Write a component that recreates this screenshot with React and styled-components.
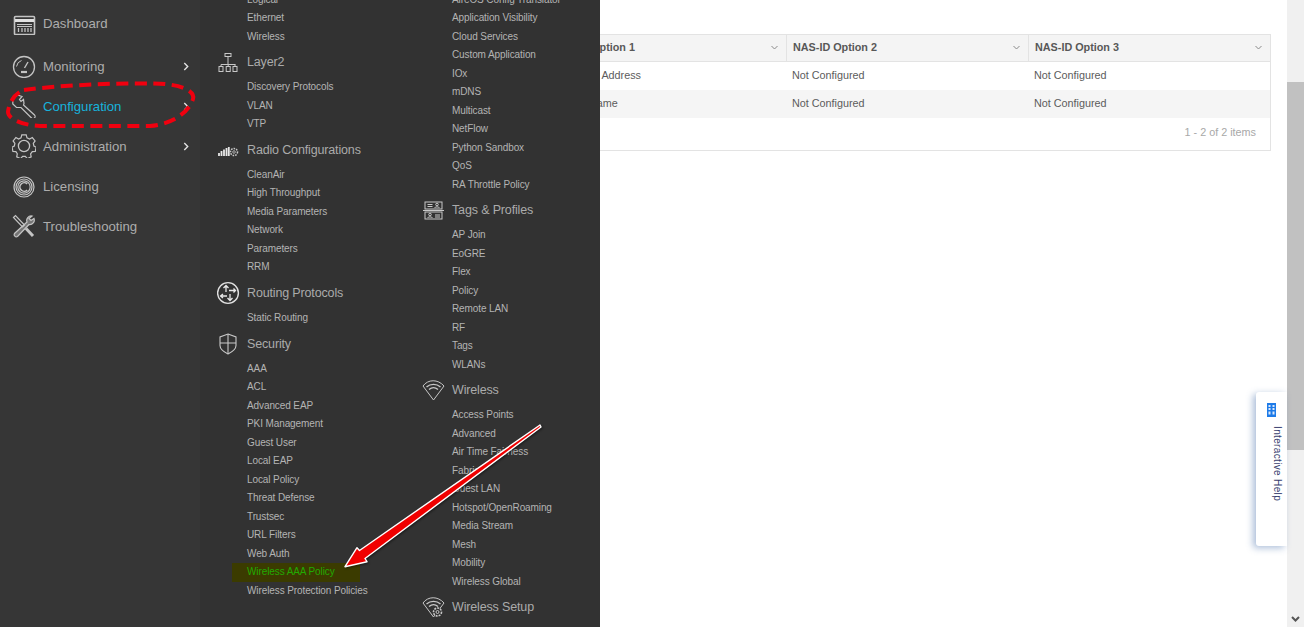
import React from "react";
import styled, { createGlobalStyle } from "styled-components";

const Global = createGlobalStyle`
  html, body { margin: 0; padding: 0; height: 627px; overflow: hidden; background: #fff; }
  body { font-family: "Liberation Sans", Arial, sans-serif; }
  * { box-sizing: border-box; }
`;

const Page = styled.div`
  position: relative;
  display: flex;
  width: 1304px;
  height: 627px;
  overflow: hidden;
`;
const Sidebar = styled.nav`
  flex: 0 0 200px;
  background: #363636;
  padding-top: 3px;
  display: flex;
  flex-direction: column;
`;
const NavItem = styled.div`
  display: flex;
  align-items: center;
  height: 40px;
  padding: 0 11px 0 12px;
  gap: 7px;
  margin-bottom: ${(p) => (p.$first ? "3px" : "0")};
  font-size: 13.2px;
  color: ${(p) => (p.$active ? "#17b3dc" : "#adadad")};
`;
const NavIcon = styled.svg`
  flex: 0 0 24px;
  width: 24px;
  height: 24px;
  fill: none;
  stroke: #c4c4c4;
  stroke-width: 1.2;
`;
const NavChevron = styled.svg`
  margin-left: auto;
  width: 6px;
  height: 9px;
  fill: none;
  stroke: #e4e4e4;
  stroke-width: 1.6;
`;
const Main = styled.main`
  flex: 1;
  min-width: 0;
  padding: 34px 33px 0 0;
  display: flex;
  justify-content: flex-end;
`;
const Table = styled.div`
  width: 971px;
  height: 117px;
  border: 1px solid #e3e3e3;
  font-size: 10.8px;
  color: #555;
  align-self: flex-start;
`;
const Row = styled.div`
  display: grid;
  grid-template-columns: 244px 242px 242px 1fr;
  height: 28px;
  padding-bottom: 2px;
  align-items: center;
  background: ${(p) => (p.$shade ? "#f5f5f5" : "#fff")};
`;
const HeadRow = styled(Row)`
  height: 27px;
  padding-bottom: 0;
  background: #f4f4f4;
  border-bottom: 1px solid #e3e3e3;
`;
const HeadCell = styled.div`
  height: 100%;
  display: flex;
  align-items: center;
  justify-content: space-between;
  padding: 0 8px 2px 6px;
  font-weight: 700;
  color: #585858;
  border-right: ${(p) => (p.$last ? "none" : "1px solid #e3e3e3")};
`;
const Cell = styled.div`
  padding-left: 5px;
  color: #5c5c5c;
`;
const SortIcon = styled.svg`
  width: 7px;
  height: 5px;
  fill: none;
  stroke: #8a8a8a;
  stroke-width: 1;
`;
const Pager = styled.div`
  height: 33px;
  display: flex;
  align-items: center;
  justify-content: flex-end;
  padding: 0 14px 5px 0;
  color: #a8a8a8;
`;
const Menu = styled.div`
  position: absolute;
  left: 200px;
  top: 0;
  width: 400px;
  height: 627px;
  background: #323232;
  overflow: hidden;
  display: flex;
`;
const MenuCol = styled.div`
  flex: 0 0 ${(p) => p.$w}px;
  margin-top: -9.5px;
  padding-left: 17px;
`;
const Group = styled.div`
  display: flex;
  align-items: center;
  height: 32.2px;
  font-size: 12.5px;
  letter-spacing: -0.15px;
  color: #ababab;
`;
const GroupIcon = styled.svg`
  flex: 0 0 30px;
  width: 30px;
  height: 24px;
  fill: none;
  stroke: #c8c8c8;
  stroke-width: 1;
`;
const Item = styled.div`
  height: 18.5px;
  line-height: 18.5px;
  padding-left: 30px;
  font-size: 10px;
  letter-spacing: -0.1px;
  white-space: nowrap;
  color: #b4b4b4;
`;
const ActiveItem = styled(Item)`
  margin-left: 15px;
  padding-left: 15px;
  width: 128px;
  color: #22aa00;
  background: #3b3b00;
`;
const Track = styled.div`
  position: absolute;
  right: 0;
  top: 0;
  width: 17px;
  height: 627px;
  background: #f0f0f0;
  padding-top: 82px;
`;
const Thumb = styled.div`
  height: 368px;
  background: #c1c1c1;
`;
const TrackArrow = styled.svg`
  position: absolute;
  left: 4px;
  bottom: 5px;
  width: 9px;
  height: 6px;
  fill: none;
  stroke: #555;
  stroke-width: 2;
`;
const Help = styled.div`
  position: absolute;
  left: 1256px;
  top: 392px;
  width: 31px;
  height: 154px;
  background: #fff;
  border-radius: 3px 0 0 3px;
  box-shadow: -3px 2px 7px rgba(70, 110, 170, 0.45);
  display: flex;
  flex-direction: column;
  align-items: flex-start;
  padding: 11px 0 0 11px;
`;
const HelpIcon = styled.svg`
  width: 9px;
  height: 14px;
`;
const HelpText = styled.span`
  writing-mode: vertical-rl;
  font-size: 10px;
  line-height: 12px;
  letter-spacing: 0.35px;
  color: #3a3f70;
  margin: 9px 0 0 4px;
  white-space: nowrap;
`;
const Annotation = styled.svg`
  position: absolute;
  left: 0;
  top: 0;
  width: 1304px;
  height: 627px;
  pointer-events: none;
`;
const ArrowShape = styled.path`
  fill: #f00000;
  stroke: #ffffff;
  stroke-width: 1.4;
  stroke-linejoin: round;
  filter: drop-shadow(1px 1px 1px rgba(0, 0, 0, 0.45));
`;
const DashedRing = styled.path`
  fill: none;
  stroke: #f0000f;
  stroke-width: 4;
  stroke-dasharray: 12 6.5;
`;

const navIcons = {
  dash: (
    <>
      <rect x="2.500" y="5.500" width="20" height="18" rx="1" strokeWidth="1.600" />
      <path d="M3 9.500h19" stroke="#e0e0e0" strokeWidth="3" />
      <path d="M5 13.500h15M5 15.500h15" strokeWidth="1" />
      <path d="M6.500 17v4M10 17v4M13 17v4M16 17v4M19 17v4" strokeWidth="1.300" />
    </>
  ),
  mon: (
    <>
      <circle cx="12" cy="13" r="10.500" strokeWidth="1.300" />
      <path d="M12.500 14l3.500-6" strokeWidth="1.400" />
      <path d="M9 18h6" strokeWidth="2.200" />
      <path d="M4.500 12.500a7.500 7.500 0 0 1 5-6" strokeWidth="1" />
    </>
  ),
  conf: (
    <path d="M5.500 1L10 2.500 7.500 5.500 9 7.500 11.500 5.500 12 9.500 11.500 11l11 10a2 2 0 0 1-3 3L9 13.500H4.500L0.800 10V5z" />
  ),
  admin: (
    <>
      <circle cx="12" cy="12" r="5.600" strokeWidth="1.300" />
      <path d="M9.800 0.800h4.400l.8 3 2.600 1.200 2.700-1.500 2.800 3.400-1.800 2.500.6 2.600 2.300 1.200-.9 4.200-3 .2-1.700 2.200.6 3-3.900 1.900-2-2.300h-2.700l-2 2.300-3.900-1.900.6-3L3.900 17.600l-3-.2L0 13.200l2.300-1.200.6-2.600L1.100 6.900l2.800-3.400 2.700 1.500L9 3.800z" />
    </>
  ),
  lic: (
    <>
      <circle cx="12" cy="13" r="10" />
      <circle cx="12" cy="13" r="8" />
      <circle cx="12" cy="13" r="6.200" />
      <path d="M15.200 9.900a4.300 4.300 0 1 0 0 6.200" strokeWidth="1.600" />
    </>
  ),
  tro: (
    <>
      <path d="M1.500 3.500l2-2 9 9.500-2 2z" strokeWidth="1.200" />
      <path d="M20 2a4.500 4.500 0 0 0-5 6L2.500 19.500a2.200 2.200 0 0 0 3 3L17 10.500a4.500 4.500 0 0 0 5-6l-3 2-2-2z" fill="#c4c4c4" fillOpacity="0.45" />
      <path d="M14 14.500l7 7.500" strokeWidth="3" />
    </>
  ),
};

const groupIcons = {
  layer2: (
    <>
      <rect x="8" y="3.500" width="6" height="3" />
      <path d="M11 6.500v8.500M4 14.500h14.500M4 14.500v2M11.200 14.500v2M18 14.500v2" />
      <rect x="2" y="16.500" width="4" height="5" />
      <rect x="9.200" y="16.500" width="4" height="5" />
      <rect x="16" y="16.500" width="4" height="5" />
    </>
  ),
  radio: (
    <>
      <path d="M2 18v-3M4.500 18v-5M7 18v-6.500M9.500 18V10M11.800 18V9" stroke="#e8e8e8" strokeWidth="1.800" />
      <circle cx="17" cy="14" r="3.500" strokeDasharray="1.600 1" strokeWidth="1.500" />
      <circle cx="17" cy="14" r="1.300" strokeWidth="0.800" />
    </>
  ),
  routing: (
    <>
      <circle cx="11" cy="12" r="10.400" stroke="#e0e0e0" strokeWidth="1.400" />
      <path d="M9 11V4.500M6.500 7L9 4.500 11.500 7M13 13v6.500M10.500 17l2.500 2.500 2.500-2.500M12 9.500h6.500M16.500 7.500l2 2-2 2M10 15H3.500M6 13l-2.500 2L6 17" stroke="#e8e8e8" strokeWidth="1.300" />
    </>
  ),
  security: (
    <>
      <path d="M11 2l8 3v8.500c0 4-4 6.500-8 8.500-4-2-8-4.500-8-8.500V5z" strokeWidth="1.100" />
      <path d="M11 2v20M3 11h16" strokeWidth="1.100" />
    </>
  ),
  tags: (
    <>
      <rect x="3" y="4" width="17" height="7" />
      <rect x="3" y="14" width="17" height="7" />
      <path d="M1 12.500h21M5.500 6.500h5M5.500 8.500h5M13 17h5M13 19h5" />
      <circle cx="15" cy="6.500" r="1.300" />
      <circle cx="8" cy="16.500" r="1.300" />
      <path d="M12.500 10c0-1.500 5-1.500 5 0M5.500 20c0-1.500 5-1.500 5 0" />
    </>
  ),
  wireless: (
    <>
      <path d="M1 8C6 1 16 1 22 8L11.500 22Z" />
      <path d="M4.500 9C8.500 5.500 14.500 5.500 18.500 9M7 11.500c3-2.500 6-2.500 9 0" strokeWidth="1.400" />
    </>
  ),
  setup: (
    <>
      <path d="M1 8C6 1 16 1 22 8L11.500 22Z" />
      <path d="M4.500 9C8.500 5.500 14.500 5.500 18.500 9M7 11.500c3-2.500 6-2.500 9 0" strokeWidth="1.400" />
      <circle cx="15.500" cy="17" r="4" fill="#323232" strokeWidth="1.600" strokeDasharray="2 1" />
      <circle cx="15.500" cy="17" r="1.500" />
    </>
  ),
};

const nav = [
  ["Dashboard", "dash"],
  ["Monitoring", "mon", true],
  ["Configuration", "conf", true],
  ["Administration", "admin", true],
  ["Licensing", "lic"],
  ["Troubleshooting", "tro"],
];

const col1 = [
  { items: ["Logical", "Ethernet", "Wireless"] },
  { title: "Layer2", icon: "layer2", items: ["Discovery Protocols", "VLAN", "VTP"] },
  { title: "Radio Configurations", icon: "radio", items: ["CleanAir", "High Throughput", "Media Parameters", "Network", "Parameters", "RRM"] },
  { title: "Routing Protocols", icon: "routing", items: ["Static Routing"] },
  { title: "Security", icon: "security", items: ["AAA", "ACL", "Advanced EAP", "PKI Management", "Guest User", "Local EAP", "Local Policy", "Threat Defense", "Trustsec", "URL Filters", "Web Auth", "Wireless AAA Policy", "Wireless Protection Policies"] },
];
const col2 = [
  { items: ["AireOS Config Translator", "Application Visibility", "Cloud Services", "Custom Application", "IOx", "mDNS", "Multicast", "NetFlow", "Python Sandbox", "QoS", "RA Throttle Policy"] },
  { title: "Tags & Profiles", icon: "tags", items: ["AP Join", "EoGRE", "Flex", "Policy", "Remote LAN", "RF", "Tags", "WLANs"] },
  { title: "Wireless", icon: "wireless", items: ["Access Points", "Advanced", "Air Time Fairness", "Fabric", "Guest LAN", "Hotspot/OpenRoaming", "Media Stream", "Mesh", "Mobility", "Wireless Global"] },
  { title: "Wireless Setup", icon: "setup", items: [] },
];

const Column = ({ groups, w }) => (
  <MenuCol $w={w}>
    {groups.map((g, i) => (
      <div key={i}>
        {g.title && (
          <Group>
            <GroupIcon viewBox="0 0 30 24">{groupIcons[g.icon]}</GroupIcon>
            {g.title}
          </Group>
        )}
        {g.items.map((t) =>
          t === "Wireless AAA Policy" ? <ActiveItem key={t}>{t}</ActiveItem> : <Item key={t}>{t}</Item>
        )}
      </div>
    ))}
  </MenuCol>
);

const Sort = () => (
  <SortIcon viewBox="0 0 7 5">
    <path d="M0.500 1l3 3 3-3" />
  </SortIcon>
);

export default function App() {
  return (
    <Page>
      <Global />
      <Sidebar>
        {nav.map(([label, icon, more], i) => (
          <NavItem key={label} $first={i === 0} $active={label === "Configuration"}>
            <NavIcon viewBox="0 0 24 24">{navIcons[icon]}</NavIcon>
            {label}
            {more && (
              <NavChevron viewBox="0 0 7 10">
                <path d="M1.500 1l4 4-4 4" />
              </NavChevron>
            )}
          </NavItem>
        ))}
      </Sidebar>
      <Main>
        <Table>
          <HeadRow>
            <HeadCell>Policy Name</HeadCell>
            <HeadCell>NAS-ID Option 1<Sort /></HeadCell>
            <HeadCell>NAS-ID Option 2<Sort /></HeadCell>
            <HeadCell $last>NAS-ID Option 3<Sort /></HeadCell>
          </HeadRow>
          <Row>
            <Cell />
            <Cell>System IP Address</Cell>
            <Cell>Not Configured</Cell>
            <Cell>Not Configured</Cell>
          </Row>
          <Row $shade>
            <Cell />
            <Cell>System Name</Cell>
            <Cell>Not Configured</Cell>
            <Cell>Not Configured</Cell>
          </Row>
          <Pager>1 - 2 of 2 items</Pager>
        </Table>
      </Main>
      <Menu>
        <Column groups={col1} w={205} />
        <Column groups={col2} w={195} />
      </Menu>
      <Track>
        <Thumb />
        <TrackArrow viewBox="0 0 9 6">
          <path d="M1 1l3.500 3.500L8 1" />
        </TrackArrow>
      </Track>
      <Help>
        <HelpIcon viewBox="0 0 9 14">
          <rect width="9" height="14" fill="#1e7be8" />
          <path d="M1.500 2h2v2h-2zM5.500 2h2v2h-2zM1.500 5h2v2h-2zM5.500 5h2v2h-2zM1.500 8.500h2v3h-2zM5.500 8.500h2v3h-2z" fill="#dbe9fb" />
        </HelpIcon>
        <HelpText>Interactive Help</HelpText>
      </Help>
      <Annotation viewBox="0 0 1304 627">
        <DashedRing d="M24 90C60 85 130 82 165 84C185 86 195 92 193 99C190 110 175 124 150 126L40 126C20 125 8 118 8 112C9 102 15 93 24 90Z" />
        <ArrowShape d="M540 425L359.500 550.500L357 547.700L345 566.700L367 561.700L365 558.500L541 427Z" />
      </Annotation>
    </Page>
  );
}
